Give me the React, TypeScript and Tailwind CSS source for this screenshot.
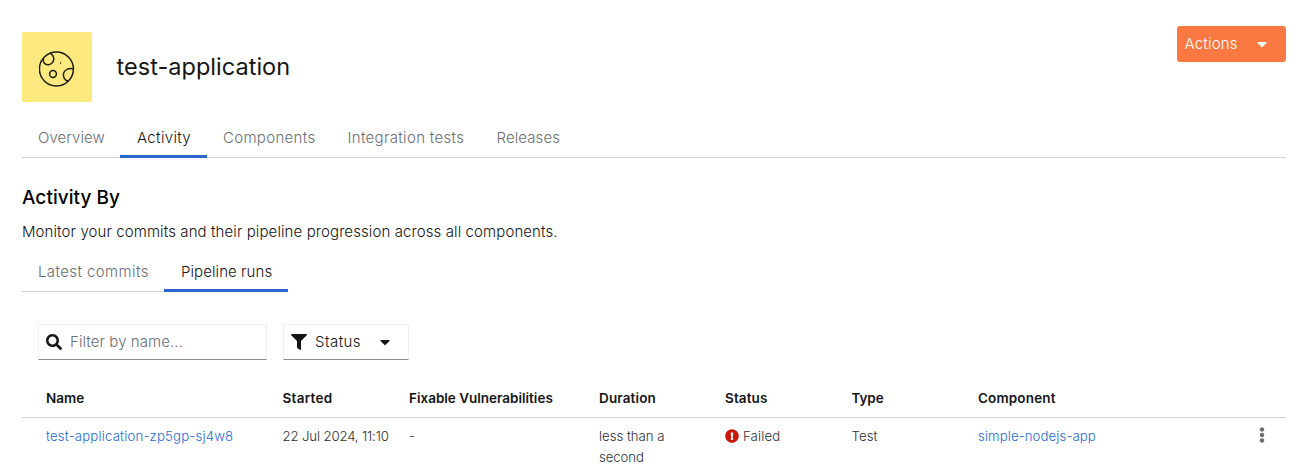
import React from 'react'
import { FaSearch, FaFilter, FaCaretDown, FaExclamationCircle, FaEllipsisV } from 'react-icons/fa'

function PlanetIcon() {
  return (
    <svg width="36" height="36" viewBox="0 0 36 36" fill="none" stroke="#1b1b16" strokeWidth="1.5">
      <circle cx="17.4" cy="18" r="17" />
      <path d="M4.6 7.4C3.2 10.8 6 14.2 9.6 13.8C13.8 13.2 16 8.6 14.2 5.4C13.5 4 12.5 3 11.2 2.2" />
      <path d="M34 17.9C30.4 16.7 26.2 18.4 24.7 21.8C23.5 25.2 25.4 29.4 29 30.1" />
      <circle cx="14" cy="23" r="3.4" />
      <circle cx="21.6" cy="12" r="0.7" fill="#1b1b16" stroke="none" />
    </svg>
  )
}

type TabItem = { label: string; width: string; tracking: string; active?: boolean }

const mainTabs: TabItem[] = [
  { label: 'Overview', width: 'w-[98px]', tracking: 'tracking-[0.08px]' },
  { label: 'Activity', width: 'w-[87px]', tracking: 'tracking-[0.33px]', active: true },
  { label: 'Components', width: 'w-[124.5px]', tracking: 'tracking-[0.32px]' },
  { label: 'Integration tests', width: 'w-[149px]', tracking: 'tracking-[0.33px]' },
  { label: 'Releases', width: 'w-[96px]', tracking: 'tracking-[0.1px]' },
]

const subTabs: TabItem[] = [
  { label: 'Latest commits', width: 'w-[142px]', tracking: 'tracking-[0.4px]' },
  { label: 'Pipeline runs', width: 'w-[124px]', tracking: 'tracking-[0.08px]', active: true },
]

function Tabs({ items }: { items: TabItem[] }) {
  return (
    <>
      {items.map((t) => (
        <div
          key={t.label}
          className={`${t.width} ${t.tracking} h-full shrink-0 whitespace-nowrap pl-4 pt-2 leading-6 ${
            t.active ? 'border-b-[3px] border-[#2b66cc] pl-[17px] text-[#151515]' : 'text-[#6a6e73]'
          }`}
        >
          {t.label}
        </div>
      ))}
    </>
  )
}

const columns = 'grid grid-cols-[236.5px_126.5px_190px_126px_126.5px_126.5px_1fr_48px] pl-6'

export default function App() {
  return (
    <div className="h-[476px] overflow-hidden bg-white px-[22px] font-['Inter',sans-serif] text-[15px] font-[350] text-[#151515]">
      <header className="flex h-[118px] items-start">
        <div className="mt-8 flex size-[70px] items-center justify-center rounded-[2px] bg-[#fcea81] pt-1">
          <PlanetIcon />
        </div>
        <h1 className="ml-[24.5px] mt-[51px] text-[23.5px] font-normal leading-8 tracking-[0.03px]">test-application</h1>
        <button className="ml-auto mt-[26px] flex h-9 w-[109px] items-center rounded-[3px] bg-[#fa7942] pl-[7.5px] text-white">
          <span className="w-[69.5px] text-left tracking-[0.2px]">Actions</span>
          <FaCaretDown className="size-4" />
        </button>
      </header>

      <nav className="flex h-10 shadow-[inset_0_-1px_0_#d2d2d2]">
        <Tabs items={mainTabs} />
      </nav>

      <h2 className="mt-[27px] text-[19px] font-medium leading-[26px] tracking-[0.05px] text-black">Activity By</h2>
      <p className="mt-[9px] leading-6 tracking-[0.1px]">
        Monitor your commits and their pipeline progression across all components.
      </p>

      <nav className="mt-2 flex h-10 w-[266px] shadow-[inset_0_-1px_0_#d2d2d2]">
        <Tabs items={subTabs} />
      </nav>

      <div className="ml-4 mt-8 flex gap-4">
        <div className="flex h-9 w-[229px] items-center border border-[#f0f0f0] border-b-[#8a8d90] pl-[7px] tracking-[0.08px] text-[#6a6e73]">
          <FaSearch className="mr-2 size-4 text-[#151515]" />
          Filter by name...
        </div>
        <div className="flex h-9 w-[126px] items-center border border-[#f0f0f0] border-b-[#8a8d90] pl-[7px]">
          <FaFilter className="mr-2 size-4" />
          <span className="w-[62px] tracking-[0.45px]">Status</span>
          <FaCaretDown className="size-4" />
        </div>
      </div>

      <div className={`${columns} mt-[21px] h-[37px] border-b border-[#d2d2d2] pt-[7px] text-[13.5px] font-semibold leading-[21px]`}>
        <span>Name</span>
        <span className="tracking-[0.28px]">Started</span>
        <span>Fixable Vulnerabilities</span>
        <span className="tracking-[0.15px]">Duration</span>
        <span className="tracking-[0.1px]">Status</span>
        <span className="tracking-[-0.1px]">Type</span>
        <span className="tracking-[0.15px]">Component</span>
        <span />
      </div>
      <div className={`${columns} pt-2 text-[13.2px] leading-[21px] text-[#2d3033]`}>
        <a className="tracking-[0.18px] text-[#1f6ad0]">test-application-zp5gp-sj4w8</a>
        <span className="tracking-[-0.14px]">22 Jul 2024, 11:10</span>
        <span>-</span>
        <span className="w-20 tracking-[-0.02px]">
          less than a <span className="tracking-[-0.1px]">second</span>
        </span>
        <span className="flex h-[21px] items-center gap-1 tracking-[0.16px]">
          <FaExclamationCircle className="mb-px size-[14px] text-[#c9190b]" />
          Failed
        </span>
        <span className="tracking-[0.1px]">Test</span>
        <a className="tracking-[0.1px] text-[#1f6ad0]">simple-nodejs-app</a>
        <FaEllipsisV className="ml-4 mt-[1px] size-4 text-[#6a6e73]" />
      </div>
    </div>
  )
}
